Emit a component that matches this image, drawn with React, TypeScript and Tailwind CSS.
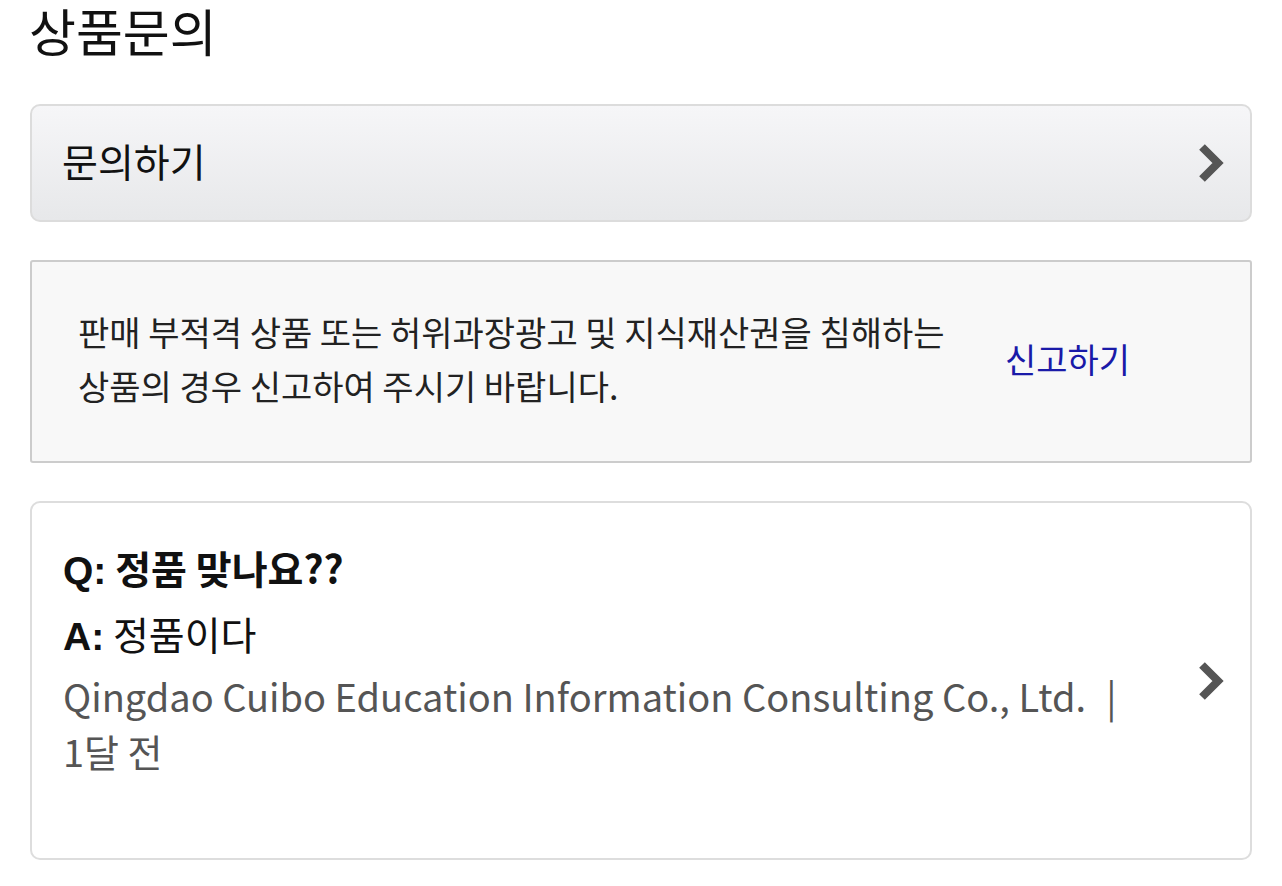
import React from "react";

function Chevron() {
  return (
    <svg width="30" height="42" viewBox="0 0 30 42" className="shrink-0">
      <polyline points="6,5 22,21 6,37" fill="none" stroke="#555555" strokeWidth="8" strokeLinejoin="miter" strokeLinecap="butt" />
    </svg>
  );
}

export default function App() {
  const kr = { fontFamily: '"Noto Sans CJK KR", "Noto Sans", sans-serif' };
  const lat = { fontFamily: '"Liberation Sans", Arial, sans-serif' };
  return (
    <div className="w-[1282px] h-[886px] bg-white overflow-hidden" style={kr}>
      <div className="px-[30px]">
        <h1 className="text-[51px] leading-[60px] text-[#111] font-normal -ml-[1px] -mt-[2px] pt-[2px]">상품문의</h1>

        <div className="mt-[44px] h-[118px] rounded-[10px] border-2 border-[#dcdcdc] bg-gradient-to-b from-[#f6f6f8] to-[#e7e8ea] flex items-center justify-between pl-[30px] pr-[24px]">
          <span className="text-[39px] leading-[50px] text-[#111] -mt-[6px]">문의하기</span>
          <Chevron />
        </div>

        <div className="mt-[38px] h-[203px] rounded-[3px] border-2 border-[#cccccc] bg-[#f8f8f8] flex items-center pl-[46px] pr-[120px]">
          <p className="text-[34px] leading-[54px] text-[#222] whitespace-nowrap -mt-[6px]">
            판매 부적격 상품 또는 허위과장광고 및 지식재산권을 침해하는<br />상품의 경우 신고하여 주시기 바랍니다.
          </p>
          <span className="ml-auto text-[34px] leading-[44px] text-[#1a1aa8] -mt-[6px]">신고하기</span>
        </div>

        <div className="mt-[38px] h-[359px] rounded-[10px] border-2 border-[#dddddd] bg-white flex items-center pl-[31px] pr-[24px]">
          <div className="flex-1 pb-[48px]">
            <div className="text-[39px] leading-[63px] font-bold text-[#111]">
              <span style={lat}>Q:</span> 정품 맞나요??
            </div>
            <div className="text-[39px] leading-[63px] text-[#111]">
              <span className="font-bold" style={lat}>A:</span> 정품이다
            </div>
            <div className="text-[38px] leading-[55px] text-[#555]">
              Qingdao Cuibo Education Information Consulting Co., Ltd.<span className="ml-[20px]">|</span>
              <br />1달 전
            </div>
          </div>
          <Chevron />
        </div>
      </div>
    </div>
  );
}
